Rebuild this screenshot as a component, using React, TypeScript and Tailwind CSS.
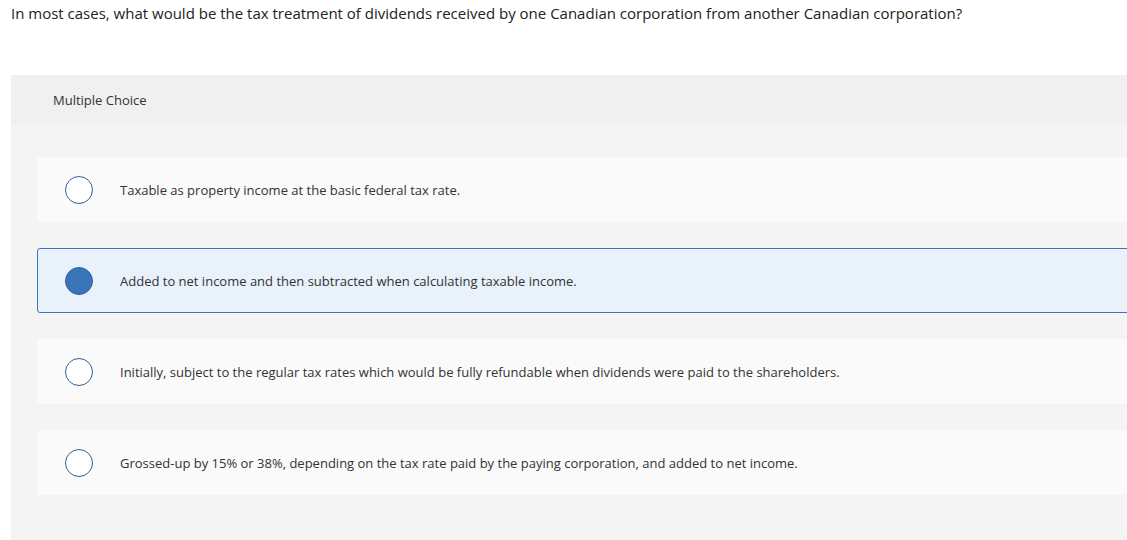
import { useState } from 'react';

const OPTIONS = [
  'Taxable as property income at the basic federal tax rate.',
  'Added to net income and then subtracted when calculating taxable income.',
  'Initially, subject to the regular tax rates which would be fully refundable when dividends were paid to the shareholders.',
  'Grossed-up by 15% or 38%, depending on the tax rate paid by the paying corporation, and added to net income.',
];

export default function App() {
  const [picked, setPicked] = useState(1);

  return (
    <div className="w-[1127px] h-[540px] overflow-hidden bg-white text-[#333] font-['Open_Sans',sans-serif]">
      <p className="pl-[11px] pt-[3px] text-[15px] leading-[20px] text-[#222]">
        In most cases, what would be the tax treatment of dividends received by one Canadian corporation from another Canadian corporation?
      </p>

      <div className="ml-[11px] mt-[52px] w-[1140px] bg-[#f4f4f4] pb-[60px]">
        {/* header */}
        <div className="h-[50px] bg-[#f0f0f0] pl-[42px] pt-[2px] flex items-center text-[13px] text-[#333]">
          Multiple Choice
        </div>

        <div className="pl-[26px] pt-[32px] flex flex-col gap-[26px]">
          {OPTIONS.map((opt, i) => {
            const on = picked === i;
            return (
              <div
                key={i}
                onClick={() => setPicked(i)}
                className={`h-[65px] flex items-center rounded-[3px] cursor-pointer ${on ? 'bg-[#e9f1fb] border border-[#3a76bb]' : 'bg-[#fafafa] border border-transparent'}`}
              >
                <div className="w-[82px] flex justify-center">
                  <span
                    className={`w-[28px] h-[28px] rounded-full border-[1.5px] border-[#2f6199] ${on ? 'bg-[#3a75b9]' : 'bg-white'}`}
                  />
                </div>
                <span className="pt-[3px] text-[13px] text-[#333]">{opt}</span>
              </div>
            );
          })}
        </div>
      </div>
    </div>
  );
}
